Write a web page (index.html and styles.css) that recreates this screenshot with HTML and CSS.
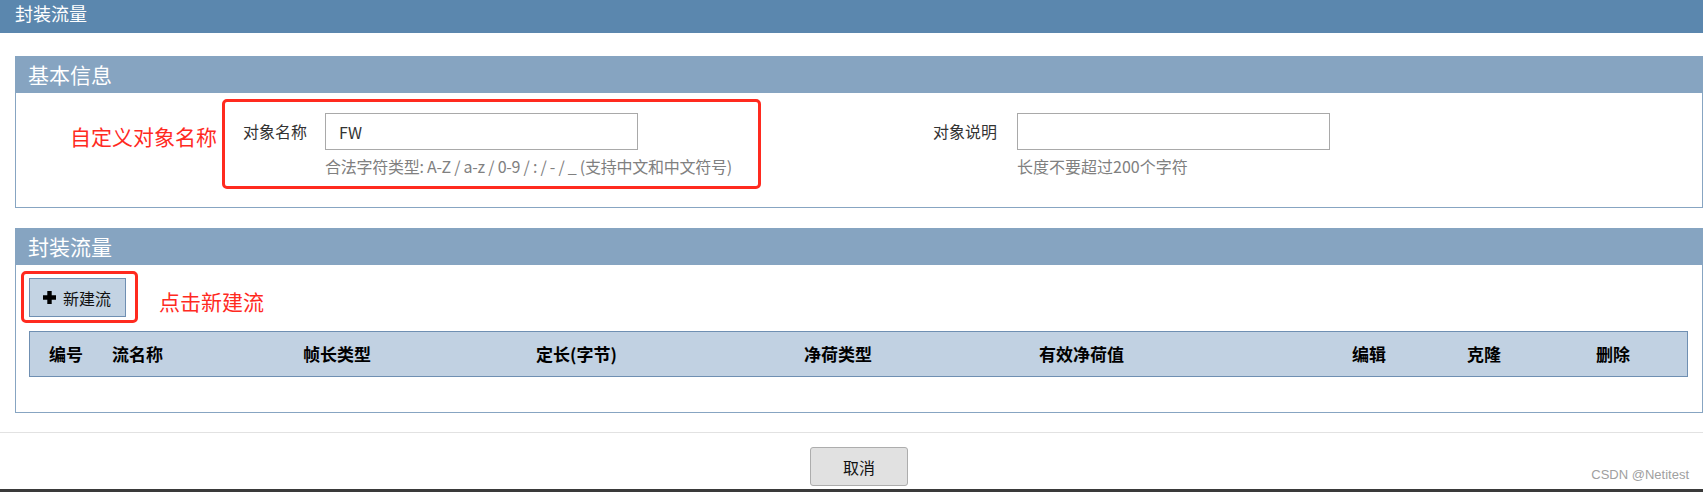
FILE: index.html
```html
<!DOCTYPE html>
<html lang="zh-CN">
<head>
<meta charset="utf-8">
<title>封装流量</title>
<link rel="stylesheet" href="styles.css">
</head>
<body>
<div class="topbar">封装流量</div>
<main class="content">
  <section class="panel">
    <div class="panel-head">基本信息</div>
    <div class="panel-body body-info">
      <div class="form-row">
        <div class="form-group">
          <label class="form-label">对象名称</label>
          <div class="form-field">
            <input class="form-input" type="text" value="FW">
            <div class="help help-tight">合法字符类型: A-Z / a-z / 0-9 / : / - / _ (支持中文和中文符号)</div>
          </div>
        </div>
        <div class="form-group">
          <label class="form-label">对象说明</label>
          <div class="form-field">
            <input class="form-input" type="text" value="">
            <div class="help">长度不要超过200个字符</div>
          </div>
        </div>
      </div>
      <div class="note note-name">自定义对象名称</div>
      <div class="mark mark-name"></div>
    </div>
  </section>

  <section class="panel panel-flow">
    <div class="panel-head">封装流量</div>
    <div class="panel-body body-flow">
      <button class="btn-new" type="button">
        <svg class="plus" width="13" height="13" viewBox="0 0 13 13"><path d="M4.3 0h4.4v4.3H13v4.4H8.7V13H4.3V8.7H0V4.3h4.3z" fill="#000"/></svg>
        <span>新建流</span>
      </button>
      <div class="flow-table">
        <div class="th">编号</div>
        <div class="th">流名称</div>
        <div class="th">帧长类型</div>
        <div class="th">定长(字节)</div>
        <div class="th">净荷类型</div>
        <div class="th">有效净荷值</div>
        <div class="th">编辑</div>
        <div class="th">克隆</div>
        <div class="th">删除</div>
      </div>
      <div class="note note-new">点击新建流</div>
      <div class="mark mark-new"></div>
    </div>
  </section>
</main>
<footer class="footer">
  <button class="btn-cancel" type="button">取消</button>
  <span class="watermark">CSDN @Netitest</span>
</footer>
<div class="taskbar"></div>
</body>
</html>
```

FILE: styles.css
```css
* { box-sizing: border-box; }

html, body {
  margin: 0;
  padding: 0;
  background: #ffffff;
  overflow: hidden;
}

body {
  width: 1703px;
  height: 492px;
  font-family: "Noto Sans CJK SC", "Noto Sans", sans-serif;
  color: #333;
  position: relative;
}

.topbar {
  height: 33px;
  background: #5b87ae;
  color: #fff;
  font-size: 18px;
  line-height: 26px;
  padding-left: 15px;
}

.content {
  padding: 23px 0 0 15px;
}

.panel {
  border: 1px solid #87a5c2;
  border-top: none;
  background: #fff;
}

.panel-flow {
  margin-top: 20px;
}

.panel-head {
  height: 37px;
  background: #86a4c1;
  color: #fff;
  font-size: 21px;
  line-height: 37px;
  margin: 0 -1px;
  padding-left: 13px;
}

.panel-body {
  position: relative;
}

.body-info {
  padding: 20px 0 30px 0;
}

.form-row {
  display: flex;
  padding-left: 151px;
}

.form-group {
  flex: 0 0 690px;
  display: flex;
  align-items: flex-start;
}

.form-label {
  width: 140px;
  margin-right: 18px;
  text-align: right;
  font-size: 16px;
  line-height: 37px;
  color: #333;
}

.form-group + .form-group .form-label {
  margin-right: 20px;
}

.form-field {
  width: 313px;
}

.form-input {
  display: block;
  width: 313px;
  height: 37px;
  border: 1px solid #a9a9a9;
  padding: 0 13px;
  font-family: inherit;
  font-size: 16px;
  color: #333;
  background: #fff;
  outline: none;
}

.help {
  margin-top: 5px;
  font-size: 16px;
  line-height: 22px;
  color: #808080;
  white-space: nowrap;
}

.help-tight {
  letter-spacing: -0.25px;
}

.body-flow {
  padding: 13px 14px 35px 13px;
}

.btn-new {
  display: flex;
  align-items: center;
  width: 97px;
  height: 39px;
  padding: 0 0 0 13px;
  background: #c3d3e3;
  border: 1px solid #6f8fb2;
  font-family: inherit;
  font-size: 16px;
  color: #111;
  cursor: pointer;
}

.btn-new .plus {
  flex: none;
  margin-right: 7px;
}

.flow-table {
  margin-top: 14px;
  display: grid;
  grid-template-columns: 63px 191px 233px 268px 235px 313px 115px 129px 110px;
  height: 46px;
  background: #c1d1e2;
  border: 1px solid #6f8fb2;
}

.th {
  padding-left: 19px;
  font-size: 17px;
  font-weight: bold;
  line-height: 44px;
  color: #000;
  white-space: nowrap;
}

.note {
  position: absolute;
  color: #ff2a1f;
  font-size: 21px;
  line-height: 28px;
  white-space: nowrap;
}

.note-name { left: 54px; top: 29px; }
.note-new { left: 143px; top: 22px; }

.mark {
  position: absolute;
  border: 3px solid #ff2a1f;
  border-radius: 5px;
}

.mark-name { left: 206px; top: 6px; width: 539px; height: 90px; }
.mark-new { left: 5px; top: 6px; width: 117px; height: 52px; }

.footer {
  position: relative;
  margin-top: 19px;
  border-top: 1px solid #e2e2e2;
  height: 57px;
  padding: 14px 0 0 15px;
  display: flex;
  justify-content: center;
  align-items: flex-start;
}

.btn-cancel {
  width: 98px;
  height: 39px;
  background: #e1e1e1;
  border: 1px solid #adadad;
  border-radius: 3px;
  font-family: inherit;
  font-size: 16px;
  color: #111;
}

.watermark {
  position: absolute;
  right: 14px;
  top: 34px;
  font-family: "Liberation Sans", Arial, sans-serif;
  font-size: 13px;
  line-height: 16px;
  color: #a0a0a0;
}

.taskbar {
  height: 3px;
  background: #3a3a3a;
}
```
